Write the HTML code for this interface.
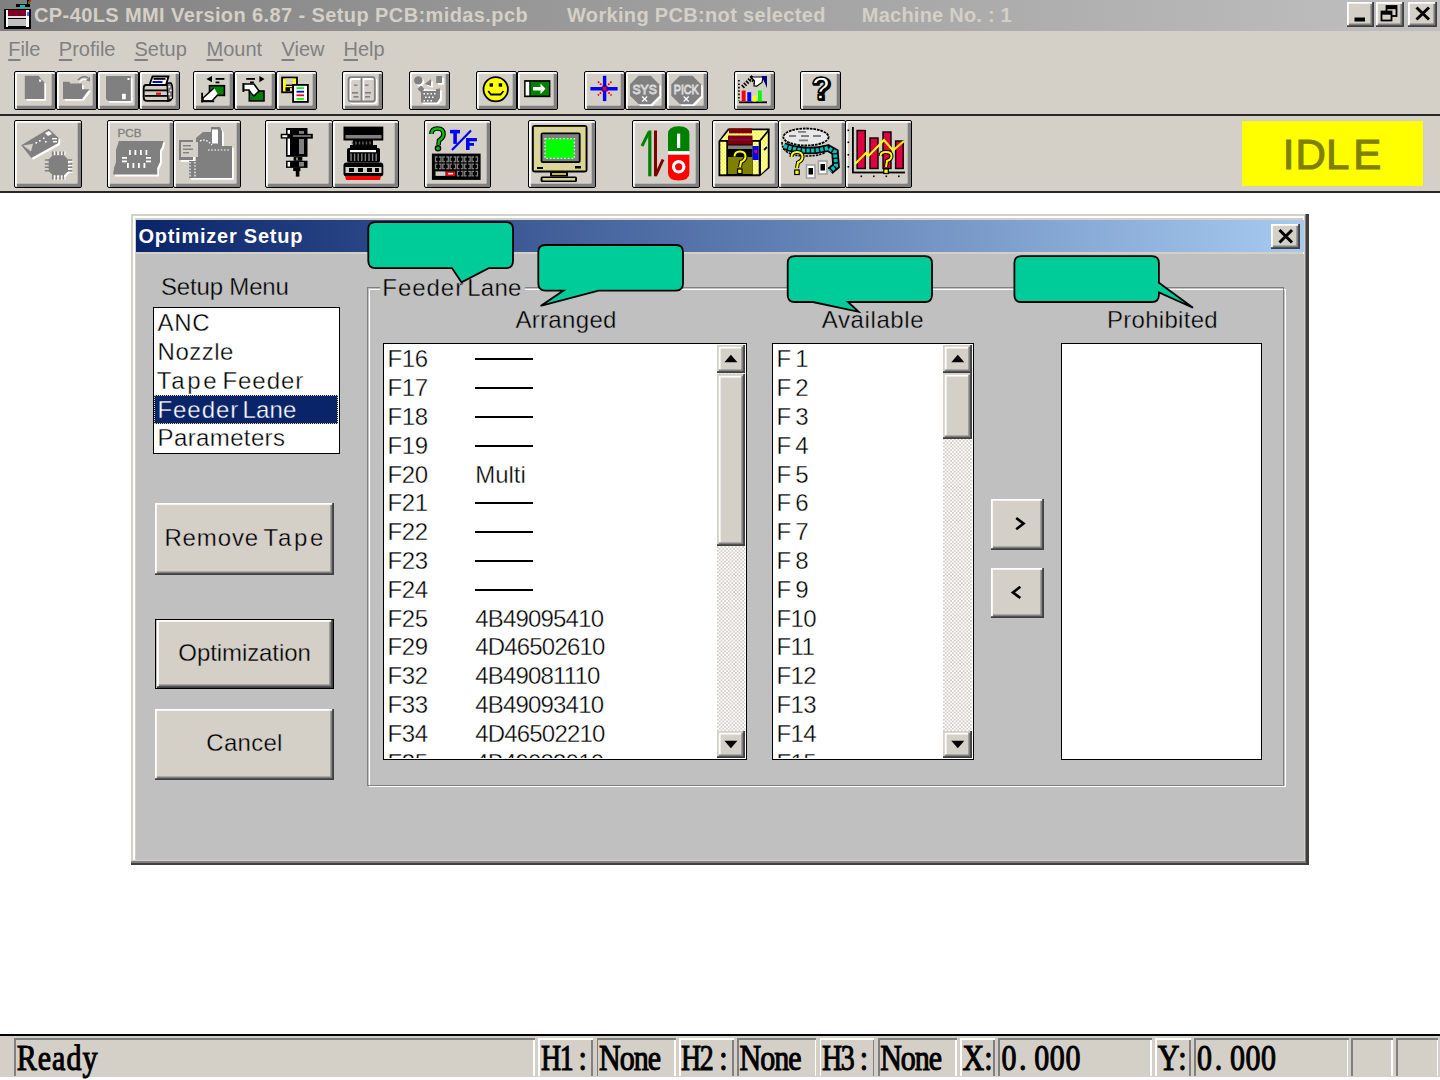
<!DOCTYPE html><html><head><meta charset="utf-8"><style>
html,body{margin:0;padding:0;}
body{width:1440px;height:1080px;overflow:hidden;position:relative;background:#fff;font-family:"Liberation Sans",sans-serif;}
.a{position:absolute;box-sizing:border-box;}
.t{position:absolute;white-space:pre;}
.tb{position:absolute;box-sizing:border-box;background:#d4d0c8;border:1.8px solid #000;border-radius:2px;box-shadow:inset 1.8px 1.8px #fff, inset -3.3px -3.3px #808080;}
.sbtn{position:absolute;box-sizing:border-box;background:#d4d0c8;box-shadow:inset -1.8px -1.8px #404040, inset 1.8px 1.8px #d4d0c8, inset -3.6px -3.6px #808080, inset 3.6px 3.6px #fff;}
.btn{position:absolute;box-sizing:border-box;background:#d4d0c8;box-shadow:inset -1.8px -1.8px #404040, inset 1.8px 1.8px #fff, inset -3.6px -3.6px #808080, inset 3.6px 3.6px #d4d0c8;}
svg{position:absolute;left:0;top:0;overflow:visible;}
</style></head><body>

<div class="a" style="left:0.0px;top:0.0px;width:1440.0px;height:193.1px;background:#d4d0c8"></div>
<div class="a" style="left:0.0px;top:0.0px;width:1440.0px;height:30.5px;background:linear-gradient(to right,#808080,#c0c0c0)"></div>
<svg width="40" height="32" style="left:0;top:0">
<rect x="4" y="9" width="27" height="20" fill="#000"/>
<rect x="7" y="10" width="20" height="6" fill="#800020"/>
<rect x="8" y="16" width="18" height="2" fill="#e0e0e0"/>
<rect x="8" y="19" width="18" height="7" fill="#c0c0c0"/>
<rect x="6" y="10" width="2" height="17" fill="#fff"/>
<rect x="26" y="10" width="3" height="17" fill="#fff"/>
<rect x="27" y="12" width="2" height="4" fill="#6060ff"/>
<rect x="16" y="4" width="12" height="3" fill="#000"/>
<rect x="20" y="5" width="5" height="3" fill="#00c0c0"/>
<rect x="27" y="0" width="3" height="7" fill="#000"/>
<rect x="28" y="1" width="2" height="3" fill="#00a000"/>
<rect x="29" y="0" width="2" height="2" fill="#ff0000"/>
</svg>
<div class="t" style="left:34.0px;top:4.8px;font-size:20px;line-height:20px;color:#d4d0c8;font-weight:bold;font-family:'Liberation Sans',sans-serif;letter-spacing:0.4px">CP-40LS MMI Version 6.87 - Setup PCB:midas.pcb</div>
<div class="t" style="left:567.0px;top:4.8px;font-size:20px;line-height:20px;color:#d4d0c8;font-weight:bold;font-family:'Liberation Sans',sans-serif;letter-spacing:0.33px">Working PCB:not selected</div>
<div class="t" style="left:861.8px;top:4.8px;font-size:20px;line-height:20px;color:#d4d0c8;font-weight:bold;font-family:'Liberation Sans',sans-serif;letter-spacing:0.23px">Machine No. : 1</div>
<div class="btn" style="left:1346.8px;top:2px;width:27.2px;height:25px"></div>
<div class="btn" style="left:1375.8px;top:2px;width:28.0px;height:25px"></div>
<div class="btn" style="left:1407.5px;top:2px;width:29.5px;height:25px"></div>
<svg width="1440" height="30">
<rect x="1354.5" y="17.5" width="10.5" height="4" fill="#000"/>
<rect x="1386.5" y="6" width="10" height="10" fill="none" stroke="#000" stroke-width="1.8"/>
<rect x="1386.5" y="6" width="10" height="3.2" fill="#000"/>
<rect x="1381.5" y="11.5" width="10" height="9" fill="#d4d0c8" stroke="#000" stroke-width="1.8"/>
<rect x="1381.5" y="11.5" width="10" height="3.2" fill="#000"/>
<path d="M1416.5 7.5 L1429 19.5 M1429 7.5 L1416.5 19.5" stroke="#000" stroke-width="3"/>
</svg>
<div class="t" style="left:8.2px;top:38.7px;font-size:20px;line-height:20px;color:#808080;font-weight:normal;font-family:'Liberation Sans',sans-serif;"><u style="text-decoration-thickness:1.5px;text-underline-offset:3px">F</u>ile</div>
<div class="t" style="left:58.8px;top:38.7px;font-size:20px;line-height:20px;color:#808080;font-weight:normal;font-family:'Liberation Sans',sans-serif;"><u style="text-decoration-thickness:1.5px;text-underline-offset:3px">P</u>rofile</div>
<div class="t" style="left:134.5px;top:38.7px;font-size:20px;line-height:20px;color:#808080;font-weight:normal;font-family:'Liberation Sans',sans-serif;"><u style="text-decoration-thickness:1.5px;text-underline-offset:3px">S</u>etup</div>
<div class="t" style="left:206.5px;top:38.7px;font-size:20px;line-height:20px;color:#808080;font-weight:normal;font-family:'Liberation Sans',sans-serif;"><u style="text-decoration-thickness:1.5px;text-underline-offset:3px">M</u>ount</div>
<div class="t" style="left:281.5px;top:38.7px;font-size:20px;line-height:20px;color:#808080;font-weight:normal;font-family:'Liberation Sans',sans-serif;"><u style="text-decoration-thickness:1.5px;text-underline-offset:3px">V</u>iew</div>
<div class="t" style="left:343.5px;top:38.7px;font-size:20px;line-height:20px;color:#808080;font-weight:normal;font-family:'Liberation Sans',sans-serif;"><u style="text-decoration-thickness:1.5px;text-underline-offset:3px">H</u>elp</div>
<div class="tb" style="left:14.4px;top:71.2px;width:41.4px;height:38.8px"></div>
<div class="tb" style="left:55.8px;top:71.2px;width:41.4px;height:38.8px"></div>
<div class="tb" style="left:97.2px;top:71.2px;width:41.4px;height:38.8px"></div>
<div class="tb" style="left:138.6px;top:71.2px;width:41.4px;height:38.8px"></div>
<div class="tb" style="left:193px;top:71.2px;width:41.4px;height:38.8px"></div>
<div class="tb" style="left:234.4px;top:71.2px;width:41.4px;height:38.8px"></div>
<div class="tb" style="left:275.8px;top:71.2px;width:41.4px;height:38.8px"></div>
<div class="tb" style="left:342px;top:71.2px;width:41.4px;height:38.8px"></div>
<div class="tb" style="left:409px;top:71.2px;width:41.4px;height:38.8px"></div>
<div class="tb" style="left:475.6px;top:71.2px;width:41.4px;height:38.8px"></div>
<div class="tb" style="left:517px;top:71.2px;width:41.4px;height:38.8px"></div>
<div class="tb" style="left:583.5px;top:71.2px;width:41.4px;height:38.8px"></div>
<div class="tb" style="left:624.9px;top:71.2px;width:41.4px;height:38.8px"></div>
<div class="tb" style="left:666.3px;top:71.2px;width:41.4px;height:38.8px"></div>
<div class="tb" style="left:733.5px;top:71.2px;width:41.4px;height:38.8px"></div>
<div class="tb" style="left:800px;top:71.2px;width:41.4px;height:38.8px"></div>
<div class="a" style="left:0.0px;top:113.5px;width:1440.0px;height:2.3px;background:#282828"></div>
<div class="tb" style="left:14.4px;top:119.9px;width:67.6px;height:67.7px"></div>
<div class="tb" style="left:106.7px;top:119.9px;width:67.6px;height:67.7px"></div>
<div class="tb" style="left:173.3px;top:119.9px;width:67.6px;height:67.7px"></div>
<div class="tb" style="left:265px;top:119.9px;width:67.6px;height:67.7px"></div>
<div class="tb" style="left:331.6px;top:119.9px;width:67.6px;height:67.7px"></div>
<div class="tb" style="left:423.5px;top:119.9px;width:67.6px;height:67.7px"></div>
<div class="tb" style="left:528px;top:119.9px;width:67.6px;height:67.7px"></div>
<div class="tb" style="left:632.4px;top:119.9px;width:67.6px;height:67.7px"></div>
<div class="tb" style="left:711.5px;top:119.9px;width:67.6px;height:67.7px"></div>
<div class="tb" style="left:778.1px;top:119.9px;width:67.6px;height:67.7px"></div>
<div class="tb" style="left:844.7px;top:119.9px;width:67.6px;height:67.7px"></div>
<div class="a" style="left:0.0px;top:190.9px;width:1440.0px;height:2.2px;background:#282828"></div>
<div class="a" style="left:1242.1px;top:120.8px;width:180.5px;height:65.3px;background:#ffff00"></div>
<div class="t" style="left:1282.8px;top:134px;font-size:42px;line-height:42px;color:#808000;-webkit-text-stroke:1.1px #808000">I</div>
<div class="t" style="left:1295.4px;top:134px;font-size:42px;line-height:42px;color:#808000;-webkit-text-stroke:1.1px #808000">D</div>
<div class="t" style="left:1326.0px;top:134px;font-size:42px;line-height:42px;color:#808000;-webkit-text-stroke:1.1px #808000">L</div>
<div class="t" style="left:1353.2px;top:134px;font-size:42px;line-height:42px;color:#808000;-webkit-text-stroke:1.1px #808000">E</div>
<svg width="1440" height="200" style="left:0;top:0"><defs><pattern id="yck" width="3.6" height="3.6" patternUnits="userSpaceOnUse"><rect width="3.6" height="3.6" fill="#fff"/><rect width="1.8" height="1.8" fill="#ff0"/><rect x="1.8" y="1.8" width="1.8" height="1.8" fill="#ff0"/></pattern><pattern id="mck" width="3.6" height="3.6" patternUnits="userSpaceOnUse"><rect width="3.6" height="3.6" fill="#c00080"/><rect width="1.8" height="1.8" fill="#ff0000"/><rect x="1.8" y="1.8" width="1.8" height="1.8" fill="#ff0000"/></pattern><pattern id="ygk" width="3.6" height="3.6" patternUnits="userSpaceOnUse"><rect width="3.6" height="3.6" fill="#d4d0c8"/><rect width="1.8" height="1.8" fill="#f0e800"/></pattern></defs><g transform="translate(1.8,1.8)" fill="#ffffff"><path d="M24.8 75.8 L38.5 75.8 L44.3 82.3 L44.3 98.9 L24.8 98.9 Z"/></g><g fill="#808080"><path d="M24.8 75.8 L38.5 75.8 L44.3 82.3 L44.3 98.9 L24.8 98.9 Z"/></g>
<rect x="39" y="79.5" width="2.2" height="2.2" fill="#fff"/>
<g transform="translate(1.8,1.8)" fill="#ffffff"><path d="M63 81.7 L69.4 81.7 L70.5 83.4 L82 83.4 L82 89.3 L89.3 89.3 L82 98.9 L63 98.9 Z"/></g><g fill="#808080"><path d="M63 81.7 L69.4 81.7 L70.5 83.4 L82 83.4 L82 89.3 L89.3 89.3 L82 98.9 L63 98.9 Z"/></g>
<path d="M78 80 Q83 74.5 88 78" fill="none" stroke="#808080" stroke-width="1.8"/><path d="M86 80.5 L90 76.5 L90 81.5 Z" fill="#808080"/>
<path d="M79.5 82 Q83 78 86.5 80" fill="none" stroke="#fff" stroke-width="1.2"/>
<g transform="translate(1.8,1.8)" fill="#ffffff"><path d="M106 76.1 L130.8 76.1 L130.8 100.9 L108 100.9 L106 98.9 Z"/></g><g fill="#808080"><path d="M106 76.1 L130.8 76.1 L130.8 100.9 L108 100.9 L106 98.9 Z"/></g>
<rect x="127.5" y="78" width="2" height="2" fill="#fff"/><rect x="122" y="93.8" width="3.8" height="5.5" fill="#fff"/>
<path d="M152.5 76.5 L168.5 76.5 L166 85 L149.5 85 Z" fill="#fff" stroke="#000" stroke-width="1.8"/>
<rect x="153.5" y="78" width="12" height="1.8" fill="#000"/>
<rect x="152.5" y="81" width="10" height="2" fill="#0000ff"/>
<path d="M146 85 L168 85 Q171.5 85 171.5 88.5 L171.5 97.5 Q171.5 100.9 168 100.9 L147 100.9 Q143.7 100.9 143.7 97.5 L143.7 88.5 Q143.7 85 146 85 Z" fill="#d4d0c8" stroke="#000" stroke-width="1.8"/>
<rect x="144.5" y="89.5" width="23" height="1.8" fill="#000"/>
<rect x="144.5" y="95" width="23" height="1.8" fill="#000"/>
<rect x="156" y="92.6" width="5" height="2.2" fill="#ff0000"/>
<path d="M167 83 L171 83 Q173 86 172.5 92 L172.5 98 L168 100.9 Z" fill="#808080" stroke="#000" stroke-width="1.4"/>
<rect x="168.5" y="86" width="1.6" height="1.6" fill="#fff"/><rect x="170" y="89.6" width="1.6" height="1.6" fill="#fff"/><rect x="168.5" y="93.2" width="1.6" height="1.6" fill="#fff"/><rect x="170" y="96.8" width="1.6" height="1.6" fill="#fff"/>
<path d="M206.4 79.1 L212 76 L212 82.2 Z" fill="#000"/>
<rect x="215.6" y="78" width="8.8" height="1.8" fill="#000"/><rect x="215.6" y="81.5" width="3.8" height="1.8" fill="#000"/>
<rect x="209.5" y="85.7" width="14.9" height="9.7" fill="#008000" stroke="#000" stroke-width="1.6"/>
<path d="M214 88 L203 98 L203 101 L212 101 L218 94.5" fill="#fff" stroke="#000" stroke-width="1.6"/>
<rect x="201.2" y="92.7" width="1.8" height="9.7" fill="#000"/>
<rect x="201.2" y="100.4" width="13" height="1.8" fill="#000"/>
<rect x="246.2" y="78" width="8.8" height="1.8" fill="#000"/><rect x="250" y="81.5" width="3.8" height="1.8" fill="#000"/>
<path d="M259.4 76 L264.5 79.1 L259.4 82.2 Z" fill="#000"/>
<rect x="249.3" y="91" width="14.7" height="9.9" fill="#008000" stroke="#000" stroke-width="1.6"/>
<path d="M243.5 84 L254 84 L259 91 L254 96 Q250 92 249 90 L243.5 90 Z" fill="#fff" stroke="#000" stroke-width="1.6"/>
<rect x="242.5" y="83" width="1.8" height="9" fill="#000"/>
<rect x="281.2" y="76.6" width="16.7" height="16.6" fill="#000"/>
<rect x="283" y="78.4" width="13.1" height="13" fill="#ffff00"/>
<rect x="285.8" y="78.4" width="7.5" height="6.2" fill="#d4d0c8"/>
<rect x="285.8" y="84.6" width="7.5" height="1.4" fill="#000"/>
<rect x="285.5" y="87.2" width="8" height="4.2" fill="#000"/>
<rect x="290" y="88" width="2" height="3" fill="#d4d0c8"/>
<rect x="292.2" y="84" width="16.6" height="18.8" fill="#000"/>
<rect x="294" y="85.8" width="13" height="15.2" fill="#fff"/>
<rect x="296.5" y="87.2" width="7.5" height="1.8" fill="#00ff00"/>
<rect x="296.5" y="90.8" width="7.5" height="1.8" fill="#0000ff"/>
<rect x="296.5" y="94.4" width="7.5" height="1.8" fill="#ff0000"/>
<rect x="296.5" y="98" width="7.5" height="1.8" fill="#00ff00"/>
<g transform="translate(1.8,1.8)" fill="none" stroke="#fff" stroke-width="1.8"><rect x="348.5" y="77.2" width="26.3" height="24.3" rx="2.5"/><path d="M361.5 77.2 V101.5"/></g>
<g fill="none" stroke="#808080" stroke-width="1.8"><rect x="348.5" y="77.2" width="26.3" height="24.3" rx="2.5"/><path d="M361.5 77.2 V101.5"/></g>
<g fill="#808080"><rect x="354" y="84.5" width="3.5" height="1.4"/><rect x="352" y="92" width="6" height="1.6"/><rect x="353.5" y="96" width="5" height="1.6"/>
<rect x="365" y="84.5" width="3.5" height="1.4"/><rect x="365" y="92" width="6" height="1.6"/><rect x="365" y="96" width="5" height="1.6"/></g>
<g transform="translate(1.8,1.8)" fill="#ffffff"><circle cx="418.3" cy="80.4" r="4.2"/><rect x="436.25" y="76" width="5.8" height="7"/><path d="M425 84 L431 79 L431 86 Z"/><path d="M421 91 L440 88.5 L440 98 L437 102.5 L421 102.5 Z"/><path d="M417.5 89 L421 85.5 L424.5 89 L421 92.5 Z"/></g><g fill="#808080"><circle cx="418.3" cy="80.4" r="4.2"/><rect x="436.25" y="76" width="5.8" height="7"/><path d="M425 84 L431 79 L431 86 Z"/><path d="M421 91 L440 88.5 L440 98 L437 102.5 L421 102.5 Z"/><path d="M417.5 89 L421 85.5 L424.5 89 L421 92.5 Z"/></g>
<g fill="#fff"><rect x="423.5" y="93" width="1.5" height="1.5"/><rect x="427" y="93" width="1.5" height="1.5"/><rect x="430.5" y="93" width="1.5" height="1.5"/><rect x="434" y="93" width="1.5" height="1.5"/><rect x="425" y="96.5" width="1.5" height="1.5"/><rect x="428.5" y="96.5" width="1.5" height="1.5"/><rect x="432" y="96.5" width="1.5" height="1.5"/><rect x="423.5" y="100" width="1.5" height="1.5"/><rect x="427" y="100" width="1.5" height="1.5"/><rect x="430.5" y="100" width="1.5" height="1.5"/><rect x="424" y="89.5" width="12" height="1.4"/></g>
<circle cx="495.7" cy="89.25" r="12.2" fill="#ffff00" stroke="#000" stroke-width="1.8"/>
<rect x="489.6" y="83.3" width="3.4" height="3.4" fill="#000"/><rect x="498.7" y="83.3" width="3.4" height="3.4" fill="#000"/>
<path d="M488.2 91 L491 94.5 L500.5 94.5 L503.5 91" fill="none" stroke="#000" stroke-width="1.8"/>
<rect x="524.1" y="80.1" width="26.3" height="17.1" fill="#000"/>
<rect x="525.6" y="81.8" width="3.7" height="13.7" fill="#fff"/>
<rect x="530.5" y="81.8" width="18.5" height="13.7" fill="#008000"/>
<path d="M533 87 L540.5 87 L540.5 83.5 L545.5 88.8 L540.5 94 L540.5 90.6 L533 90.6 Z" fill="#fff"/>
<path d="M598 81.5 L611.5 95.5 M611.5 81.5 L598 95.5" stroke="#ff0000" stroke-width="1.8" stroke-dasharray="1.8 1.2"/>
<rect x="602.9" y="75.8" width="3.4" height="25.3" fill="#0000ff"/>
<rect x="590.4" y="87" width="27.2" height="3.5" fill="#0000ff"/>
<rect x="602.9" y="87" width="3.4" height="3.5" fill="#ff0000"/>
<path d="M638.5 75.8 L650.8 75.8 L659.3 84.3 L659.3 95.7 L650.8 104.2 L638.5 104.2 L630 95.7 L630 84.3 Z" transform="translate(1.8,1.8)" fill="#fff"/><path d="M638.5 75.8 L650.8 75.8 L659.3 84.3 L659.3 95.7 L650.8 104.2 L638.5 104.2 L630 95.7 L630 84.3 Z" fill="#808080"/>
<text x="644.65" y="93.5" text-anchor="middle" font-family="Liberation Sans" font-size="13" fill="#808080" stroke="#e0e0e0" stroke-width="0.9" textLength="24.299999999999955" lengthAdjust="spacingAndGlyphs">SYS</text>
<path d="M642.15 96.5 L647.15 101.5 M647.15 96.5 L642.15 101.5" stroke="#fff" stroke-width="1.2"/>
<path d="M679.8 75.8 L692.6 75.8 L701.1 84.3 L701.1 95.7 L692.6 104.2 L679.8 104.2 L671.3 95.7 L671.3 84.3 Z" transform="translate(1.8,1.8)" fill="#fff"/><path d="M679.8 75.8 L692.6 75.8 L701.1 84.3 L701.1 95.7 L692.6 104.2 L679.8 104.2 L671.3 95.7 L671.3 84.3 Z" fill="#808080"/>
<text x="686.2" y="93.5" text-anchor="middle" font-family="Liberation Sans" font-size="12" fill="#808080" stroke="#e0e0e0" stroke-width="0.9" textLength="24.800000000000068" lengthAdjust="spacingAndGlyphs">PICK</text>
<path d="M683.7 96.5 L688.7 101.5 M688.7 96.5 L683.7 101.5" stroke="#fff" stroke-width="1.2"/>
<path d="M738.9 80 V101" stroke="#000" stroke-width="1.6" stroke-dasharray="1.6 1.8"/>
<rect x="738.9" y="101.4" width="28.1" height="1.8" fill="#000"/>
<rect x="741.7" y="90.5" width="3.9" height="11" fill="#ff0000"/>
<rect x="747.3" y="92.2" width="3.9" height="9.3" fill="#0000ff"/>
<rect x="752.5" y="95.6" width="4" height="5.9" fill="#ffff00"/>
<rect x="758" y="90.5" width="3.8" height="11" fill="#00ff00"/>
<path d="M742.5 87 L751.5 78 L758 86" fill="none" stroke="#000" stroke-width="4" stroke-dasharray="1.6 1.4"/>
<path d="M751 77 L763 77 L762 82.5 L757 86 L754 86 L754.5 81 Z" fill="#fff" stroke="#000" stroke-width="1.2"/>
<path d="M761.5 76 L767 76 L767 88 Z" fill="#000080"/>
<text x="821" y="99" text-anchor="middle" font-family="Liberation Sans" font-weight="bold" font-size="31" fill="#000" stroke="#000" stroke-width="2.2" transform="translate(1.2,0.6)">?</text>
<text x="821" y="99" text-anchor="middle" font-family="Liberation Sans" font-weight="bold" font-size="31" fill="#fff" stroke="#000" stroke-width="1.6">?</text>
<g transform="translate(1.8,1.8)" fill="#ffffff"><path d="M21.3 145.3 L48.7 128.7 L58.7 138 L58 143.3 L31.3 158 Z"/><path d="M52.7 155.3 L64 155.3 L68 159.3 L68 171.3 L64 175.3 L52.7 175.3 L48.7 171.3 L48.7 159.3 Z"/></g><g fill="#808080"><path d="M21.3 145.3 L48.7 128.7 L58.7 138 L58 143.3 L31.3 158 Z"/><path d="M52.7 155.3 L64 155.3 L68 159.3 L68 171.3 L64 175.3 L52.7 175.3 L48.7 171.3 L48.7 159.3 Z"/></g>
<path d="M23 145.5 L33 143.8 L31 151.5 Z" fill="#d4d0c8"/><g fill="#fff"><rect x="35.5" y="142" width="1.6" height="1.6"/><rect x="39" y="140" width="1.6" height="1.6"/><rect x="43" y="137.5" width="1.6" height="1.6"/><rect x="45" y="141" width="1.6" height="1.6"/><path d="M45 133 L49 131 L52 134 L48 136 Z"/><rect x="52" y="138" width="5" height="1.4"/><rect x="53" y="141" width="4" height="1.4"/></g>
<g stroke="#808080" stroke-width="1.5"><path d="M52.7 151.5 V155.5 M56.3 151.5 V155.5 M60 151.5 V155.5 M63.3 151.5 V155.5 M52.7 175 V179.5 M56.3 175 V179.5 M60 175 V179.5 M63.3 175 V179.5 M44.8 160 H49 M44.8 164 H49 M44.8 167.3 H49 M44.8 170.7 H49 M68 160 H72.2 M68 164 H72.2 M68 167.3 H72.2 M68 170.7 H72.2"/></g>
<g stroke="#fff" stroke-width="1"><path d="M54.5 151.5 V155 M58 151.5 V155 M61.8 151.5 V155 M65 151.5 V155 M54.5 176 V180 M58 176 V180 M61.8 176 V180 M65 176 V180 M72.5 161.5 H68.5 M72.5 165.5 H68.5 M72.5 169 H68.5 M72.5 172.5 H68.5"/></g>
<text x="117.5" y="136.7" font-family="Liberation Sans" font-size="11.5" fill="#808080" stroke="#808080" stroke-width="0.3" textLength="24" lengthAdjust="spacingAndGlyphs">PCB</text>
<g transform="translate(1.8,1.8)" fill="#ffffff"><path d="M118.9 141 L163.4 141 L162 147 L160 150 L160 162 L157.2 168 L157.2 174.6 L113.1 174.6 L114 168 L116 162 L116 150 Z"/></g><g fill="#808080"><path d="M118.9 141 L163.4 141 L162 147 L160 150 L160 162 L157.2 168 L157.2 174.6 L113.1 174.6 L114 168 L116 162 L116 150 Z"/></g>
<g fill="#fff"><rect x="129" y="150" width="1.8" height="5"/><rect x="134.5" y="150" width="1.8" height="5"/><rect x="140" y="150" width="1.8" height="5"/><rect x="145.5" y="150" width="1.8" height="5"/><rect x="127" y="163" width="1.8" height="5"/><rect x="132.5" y="163" width="1.8" height="5"/><rect x="138" y="163" width="1.8" height="5"/><rect x="143.5" y="163" width="1.8" height="5"/><rect x="122" y="157" width="5" height="1.8"/><rect x="122" y="160.5" width="5" height="1.8"/><rect x="146" y="157" width="5" height="1.8"/><rect x="146" y="160.5" width="5" height="1.8"/></g>
<g transform="translate(1.8,1.8)" fill="#ffffff"><path d="M196 138 L203 132 L211 132 L211 127 L220 127 L222 131 L222 146 L232 146 L232 178 L189 178 L189 161 L196 161 Z"/><path d="M179 140 L193 140 L193 160 L179 160 Z"/></g><g fill="#808080"><path d="M196 138 L203 132 L211 132 L211 127 L220 127 L222 131 L222 146 L232 146 L232 178 L189 178 L189 161 L196 161 Z"/><path d="M179 140 L193 140 L193 160 L179 160 Z"/></g>
<g fill="#fff"><rect x="212" y="129.5" width="6" height="14"/><rect x="181" y="142" width="17" height="15" fill="#d4d0c8"/><rect x="183" y="145" width="8" height="1.4" fill="#808080"/><rect x="183" y="148.5" width="10" height="1.4" fill="#808080"/><rect x="183" y="152" width="6" height="1.4" fill="#808080"/></g>
<g fill="none" stroke="#fff" stroke-width="1.2" stroke-dasharray="1.6 1.6"><path d="M190 162 V178 M195 162 V178"/><path d="M200 141 Q206 138 212 145"/><path d="M208 150 H230"/></g>
<rect x="286" y="128" width="21.5" height="28.8" fill="#000"/>
<rect x="287.6" y="130" width="2.4" height="25" fill="#fff"/>
<rect x="299" y="131" width="5" height="3" fill="#808080"/>
<rect x="299" y="139" width="5" height="15" fill="#808080"/>
<rect x="280.7" y="133.8" width="32.1" height="4.8" fill="#000"/>
<rect x="282.3" y="135.2" width="5" height="2" fill="#fff"/>
<rect x="293" y="135.2" width="18" height="1.6" fill="#808080"/>
<rect x="293.6" y="156.8" width="8.7" height="4" fill="#000"/>
<rect x="296" y="157.5" width="2" height="3" fill="#808080"/>
<rect x="286" y="160.7" width="21.5" height="7.2" fill="#000"/>
<rect x="287.6" y="162" width="2.4" height="4.5" fill="#fff"/>
<rect x="299" y="162" width="5" height="4.5" fill="#808080"/>
<rect x="293.2" y="167.9" width="7.2" height="3.2" fill="#000"/>
<rect x="295.8" y="171" width="3.6" height="5.6" fill="#000"/>
<rect x="343.5" y="126.6" width="39.8" height="13.9" fill="#000"/>
<rect x="345.5" y="135" width="36" height="3.5" fill="#808080"/>
<rect x="353" y="140" width="20" height="6" fill="#000"/>
<rect x="350" y="145" width="27" height="4" fill="#000"/>
<rect x="347" y="148" width="33" height="14.5" rx="2" fill="#000"/>
<rect x="350" y="150" width="26" height="2.2" fill="#fff"/>
<g stroke="#808080" stroke-width="1.4"><path d="M351 153.5 V161 M354.6 153.5 V161 M358.2 153.5 V161 M361.8 153.5 V161 M365.4 153.5 V161 M369 153.5 V161 M372.6 153.5 V161 M376.2 153.5 V161"/><path d="M352.5 141.5 V144.5 M356 141.5 V144.5 M359.5 141.5 V144.5 M363 141.5 V144.5 M366.5 141.5 V144.5 M370 141.5 V144.5" stroke="#606060"/></g>
<rect x="343.5" y="162.5" width="39.8" height="14" rx="3" fill="#000"/>
<rect x="345.5" y="167" width="36" height="6" fill="#d4d0c8"/>
<g fill="#000"><rect x="349" y="168" width="5" height="4"/><rect x="358" y="168" width="5" height="4"/><rect x="367" y="168" width="5" height="4"/><rect x="375" y="168" width="4" height="4"/></g>
<path d="M345 176 L381 176 L380 180 L346 180 Z" fill="#ff0000"/>
<path d="M431.5 134 Q431.5 128.5 437.5 128.5 Q443.5 128.5 443.5 134 Q443.5 138 439 140.5 L438.5 145" fill="none" stroke="#000" stroke-width="4.6"/>
<path d="M431.5 134 Q431.5 128.5 437.5 128.5 Q443.5 128.5 443.5 134 Q443.5 138 439 140.5 L438.5 145" fill="none" stroke="#00c000" stroke-width="2.4"/>
<circle cx="438" cy="148.3" r="2.6" fill="#00c000" stroke="#000" stroke-width="1.4"/>
<rect x="450" y="129.9" width="10" height="3.5" fill="#0000ff"/><rect x="453.3" y="129.9" width="3.6" height="14" fill="#0000ff"/>
<path d="M452 149.9 L471 130.5" stroke="#0000ff" stroke-width="2.2"/>
<rect x="466" y="138" width="3.6" height="12" fill="#0000ff"/><rect x="466" y="138" width="10.9" height="3.3" fill="#0000ff"/><rect x="466" y="143" width="8" height="2.8" fill="#0000ff"/>
<rect x="431.9" y="153.6" width="48.7" height="26.3" fill="#000"/>
<path d="M437.5 157.0 H435.5 V161.5 H437.5 M439.0 157.0 H441.0 V161.5 H439.0" fill="none" stroke="#808080" stroke-width="1.3"/>
<path d="M444.8 157.0 H442.8 V161.5 H444.8 M446.3 157.0 H448.3 V161.5 H446.3" fill="none" stroke="#808080" stroke-width="1.3"/>
<path d="M452.1 157.0 H450.1 V161.5 H452.1 M453.6 157.0 H455.6 V161.5 H453.6" fill="none" stroke="#808080" stroke-width="1.3"/>
<path d="M459.4 157.0 H457.4 V161.5 H459.4 M460.9 157.0 H462.9 V161.5 H460.9" fill="none" stroke="#808080" stroke-width="1.3"/>
<path d="M466.7 157.0 H464.7 V161.5 H466.7 M468.2 157.0 H470.2 V161.5 H468.2" fill="none" stroke="#808080" stroke-width="1.3"/>
<path d="M474.0 157.0 H472.0 V161.5 H474.0 M475.5 157.0 H477.5 V161.5 H475.5" fill="none" stroke="#808080" stroke-width="1.3"/>
<path d="M437.5 164.2 H435.5 V168.7 H437.5 M439.0 164.2 H441.0 V168.7 H439.0" fill="none" stroke="#808080" stroke-width="1.3"/>
<path d="M444.8 164.2 H442.8 V168.7 H444.8 M446.3 164.2 H448.3 V168.7 H446.3" fill="none" stroke="#808080" stroke-width="1.3"/>
<path d="M452.1 164.2 H450.1 V168.7 H452.1 M453.6 164.2 H455.6 V168.7 H453.6" fill="none" stroke="#808080" stroke-width="1.3"/>
<path d="M459.4 164.2 H457.4 V168.7 H459.4 M460.9 164.2 H462.9 V168.7 H460.9" fill="none" stroke="#808080" stroke-width="1.3"/>
<path d="M466.7 164.2 H464.7 V168.7 H466.7 M468.2 164.2 H470.2 V168.7 H468.2" fill="none" stroke="#808080" stroke-width="1.3"/>
<path d="M474.0 164.2 H472.0 V168.7 H474.0 M475.5 164.2 H477.5 V168.7 H475.5" fill="none" stroke="#808080" stroke-width="1.3"/>
<rect x="435.5" y="171.4" width="10" height="4.5" fill="#d4d0c8"/>
<rect x="446.1" y="171.4" width="9" height="4.5" fill="#ff0000"/><rect x="448.1" y="172.9" width="5" height="1.5" fill="#fff"/>
<path d="M459.4 171.4 H457.4 V175.9 H459.4 M460.9 171.4 H462.9 V175.9 H460.9" fill="none" stroke="#808080" stroke-width="1.3"/>
<path d="M466.7 171.4 H464.7 V175.9 H466.7 M468.2 171.4 H470.2 V175.9 H468.2" fill="none" stroke="#808080" stroke-width="1.3"/>
<path d="M474.0 171.4 H472.0 V175.9 H474.0 M475.5 171.4 H477.5 V175.9 H475.5" fill="none" stroke="#808080" stroke-width="1.3"/>
<rect x="531.9" y="124.9" width="55.6" height="47.5" rx="3" fill="#000"/>
<rect x="533.8" y="126.8" width="51.8" height="43.7" fill="url(#ygk)"/>
<rect x="540.6" y="132.4" width="40" height="30.6" rx="2" fill="#000"/>
<rect x="542.4" y="134.2" width="36.4" height="27" fill="#808080"/>
<rect x="545" y="138.6" width="29.4" height="19.8" fill="#00ff00"/><rect x="545" y="138.6" width="29.4" height="19.8" fill="none" stroke="#e0e0e0" stroke-width="1.4" stroke-dasharray="1.8 1.8"/>
<rect x="537" y="167" width="6" height="2" fill="#000"/><rect x="575" y="166" width="6" height="2.5" fill="#000"/>
<rect x="550" y="172" width="18" height="4.5" fill="#000"/><rect x="552" y="173" width="14" height="2" fill="#c8c000"/>
<rect x="540.6" y="176.5" width="36.4" height="5.5" rx="1.5" fill="#000"/><rect x="542.5" y="178" width="32.6" height="2.5" fill="#d4d0a0"/>
<rect x="648.2" y="130.5" width="3.2" height="45.8" fill="#008000"/>
<path d="M642 146 L649 132" stroke="#008000" stroke-width="3"/>
<rect x="654" y="130.5" width="3" height="45.8" fill="#800000"/>
<path d="M656 175 L663 159.5" stroke="#800000" stroke-width="3"/>
<path d="M668 151.3 L668 134 Q668 126.3 678.7 126.3 Q689.4 126.3 689.4 134 L689.4 151.3 Z" fill="#008000"/>
<rect x="677" y="133.6" width="3.2" height="14.4" fill="#fff"/>
<path d="M668 154.5 L689.4 154.5 L689.4 173 Q689.4 180.5 678.7 180.5 Q668 180.5 668 173 Z" fill="#ff0000"/>
<circle cx="678.7" cy="166.8" r="5.2" fill="none" stroke="#fff" stroke-width="3.2"/><rect x="668" y="151.3" width="21.4" height="3.2" fill="#fff"/>
<path d="M718.5 141 L728 128.4 L769.6 128.4 L769.6 168 L760 176.3 L718.5 176.3 Z" fill="#000"/>
<path d="M721 140 L729 130.2 L767.5 130.2 L759.5 140 Z" fill="url(#yck)"/>
<rect x="729" y="128.4" width="23" height="5" fill="#800000"/>
<rect x="720.3" y="141.8" width="6" height="32.5" fill="url(#yck)"/>
<rect x="752.7" y="141.8" width="6" height="32.5" fill="url(#yck)"/>
<path d="M761 141 L767.8 132.5 L767.8 167.5 L761 174 Z" fill="url(#yck)"/>
<rect x="728" y="135.5" width="24.5" height="9" fill="#800000"/>
<rect x="729" y="139" width="22" height="1.4" fill="#800080"/>
<rect x="728" y="145.5" width="24.5" height="3.5" fill="#808080"/>
<rect x="728" y="157" width="24.5" height="17" fill="#808000"/>
<rect x="752.7" y="146" width="6" height="14" fill="#0000ff"/><rect x="754.5" y="150" width="2.5" height="3" fill="#ff0000"/>
<path d="M734.5 156.5 Q734.5 151.5 740 151.5 Q745.5 151.5 745.5 156.5 Q745.5 160 741 162 L740 167" fill="none" stroke="#000" stroke-width="4"/>
<path d="M734.5 156.5 Q734.5 151.5 740 151.5 Q745.5 151.5 745.5 156.5 Q745.5 160 741 162 L740 167" fill="none" stroke="#ffff00" stroke-width="2"/>
<rect x="737.5" y="169" width="4.5" height="4.5" fill="#ffff00" stroke="#000" stroke-width="1.2"/>
<path d="M764 150 L767 147" stroke="#000080" stroke-width="1.8"/>
<ellipse cx="806" cy="137" rx="22.6" ry="8.5" fill="#e8e8e8" stroke="#000" stroke-width="1.8" stroke-dasharray="2.6 0.9"/>
<g fill="#808080"><rect x="789" y="135" width="7" height="2"/><rect x="801" y="135" width="8" height="2"/><rect x="813" y="135" width="8" height="2"/><rect x="798" y="131" width="8" height="1.8"/><rect x="799" y="139.5" width="9" height="1.8"/></g>
<path d="M782 142 Q782 156 806 156 Q826 156 828 148" fill="none" stroke="#000" stroke-width="1.6" stroke-dasharray="2.4 1"/>
<path d="M784 146 Q806 154 828 148 L835 152 L836 166 L830 171" fill="none" stroke="#000" stroke-width="7.5"/>
<path d="M784 146 Q806 154 828 148 L835 152 L836 166 L830 171" fill="none" stroke="#00c0c0" stroke-width="4" stroke-dasharray="3.2 1.4"/>
<path d="M791.5 157 Q791.5 152 797 152 Q802.5 152 802.5 157 Q802.5 160.5 798 162.5 L797 168" fill="none" stroke="#000" stroke-width="4"/>
<path d="M791.5 157 Q791.5 152 797 152 Q802.5 152 802.5 157 Q802.5 160.5 798 162.5 L797 168" fill="none" stroke="#ffff00" stroke-width="2"/>
<rect x="794.7" y="170" width="4.5" height="4.5" fill="#ffff00" stroke="#000" stroke-width="1.2"/>
<rect x="806.5" y="165" width="8.5" height="13" fill="#fff" stroke="#a0a0a0" stroke-width="1.6"/><rect x="808.5" y="168" width="4.5" height="6.5" fill="#000"/>
<rect x="818.5" y="161" width="8.5" height="13" fill="#fff" stroke="#a0a0a0" stroke-width="1.6"/><rect x="820.5" y="164" width="4.5" height="6.5" fill="#000"/>
<rect x="852" y="127" width="1.8" height="46" fill="#000"/>
<rect x="852" y="171.6" width="53" height="1.8" fill="#000"/>
<g fill="#000"><rect x="847.5" y="129.5" width="1.6" height="1.6"/><rect x="847.5" y="141.5" width="1.6" height="1.6"/><rect x="847.5" y="154" width="1.6" height="1.6"/><rect x="847.5" y="166" width="1.6" height="1.6"/>
<rect x="860.5" y="175.5" width="1.6" height="1.6"/><rect x="873" y="175.5" width="1.6" height="1.6"/><rect x="885.5" y="175.5" width="1.6" height="1.6"/><rect x="898" y="175.5" width="1.6" height="1.6"/></g>
<g fill="url(#mck)" stroke="#000" stroke-width="1.4"><rect x="857.1" y="130.5" width="8.2" height="38"/><rect x="870" y="138" width="8" height="30.5"/><rect x="883" y="132" width="8" height="36.5"/><rect x="895.6" y="141" width="7.6" height="27.5"/></g>
<path d="M855 164 L866 153 L868.5 156 L884 140 L893 150.5 L904 141" fill="none" stroke="#ffff00" stroke-width="2"/>
<path d="M880.5 156 Q880.5 152 886 152 Q891.5 152 891.5 156 Q891.5 159.5 887 161 L886 167" fill="none" stroke="#000" stroke-width="4"/>
<path d="M880.5 156 Q880.5 152 886 152 Q891.5 152 891.5 156 Q891.5 159.5 887 161 L886 167" fill="none" stroke="#ffff00" stroke-width="2"/>
<rect x="883.8" y="169" width="4.5" height="4.5" fill="#ffff00" stroke="#000" stroke-width="1.2"/></svg>
<div class="a" style="left:131.1px;top:214.4px;width:1178.2px;height:650.6px;background:#404040"></div>
<div class="a" style="left:131.1px;top:214.4px;width:1175.4px;height:648.2px;background:#808080"></div>
<div class="a" style="left:131.1px;top:214.4px;width:1175.4px;height:648.2px;background:#808080"></div>
<div class="a" style="left:131.1px;top:214.4px;width:1174.1px;height:647.1px;background:#d4d0c8"></div>
<div class="a" style="left:133.0px;top:216.2px;width:1172.2px;height:645.3px;background:#d4d0c8"></div>
<div class="a" style="left:133.0px;top:216.2px;width:1170.5px;height:643.6px;background:#fff"></div>
<div class="a" style="left:134.9px;top:218.1px;width:1168.6px;height:641.7px;background:#d4d0c8"></div>
<div class="a" style="left:136.0px;top:254.0px;width:1167.5px;height:605.8px;background:#c0c0c0"></div>
<div class="a" style="left:136.0px;top:220.0px;width:1167.9px;height:32.4px;background:linear-gradient(to right,#0a246a,#a6caf0)"></div>
<div class="t" style="left:138.4px;top:225.9px;font-size:20px;line-height:20px;color:#fff;font-weight:bold;font-family:'Liberation Sans',sans-serif;letter-spacing:0.76px">Optimizer Setup</div>
<div class="btn" style="left:1271px;top:223.7px;width:29px;height:25.2px"></div>
<svg width="1440" height="1080"><path d="M1279.5 230 L1292 242.5 M1292 230 L1279.5 242.5" stroke="#000" stroke-width="3"/></svg>
<div class="t" style="left:161.0px;top:275.3px;font-size:24px;line-height:24px;color:#000;font-weight:normal;font-family:'Liberation Sans',sans-serif;letter-spacing:-0.17px;-webkit-text-stroke:0.35px #c0c0c0">Setup Menu</div>
<div class="a" style="left:152.9px;top:306.6px;width:187.3px;height:147.3px;background:#fff;border:1.8px solid #000"></div>
<div class="a" style="left:154.4px;top:394.9px;width:184.0px;height:29.0px;background:#0a246a;outline:1.8px dotted #e8d080;outline-offset:-1.8px"></div>
<div class="t" style="left:157.6px;top:311.2px;font-size:24px;line-height:24px;color:#000;font-weight:normal;font-family:'Liberation Sans',sans-serif;letter-spacing:0.65px;-webkit-text-stroke:0.35px #fff">ANC</div>
<div class="t" style="left:157.6px;top:340.0px;font-size:24px;line-height:24px;color:#000;font-weight:normal;font-family:'Liberation Sans',sans-serif;letter-spacing:0.48px;-webkit-text-stroke:0.35px #fff">Nozzle</div>
<div class="t" style="left:156.8px;top:368.8px;font-size:24px;line-height:24px;color:#000;font-weight:normal;font-family:'Liberation Sans',sans-serif;letter-spacing:2.57px;-webkit-text-stroke:0.35px #fff">Tape</div>
<div class="t" style="left:222.4px;top:368.8px;font-size:24px;line-height:24px;color:#000;font-weight:normal;font-family:'Liberation Sans',sans-serif;letter-spacing:0.96px;-webkit-text-stroke:0.35px #fff">Feeder</div>
<div class="t" style="left:157.4px;top:397.6px;font-size:24px;line-height:24px;color:#fff;font-weight:normal;font-family:'Liberation Sans',sans-serif;letter-spacing:0.96px;-webkit-text-stroke:0.35px #0a246a">Feeder</div>
<div class="t" style="left:242.4px;top:397.6px;font-size:24px;line-height:24px;color:#fff;font-weight:normal;font-family:'Liberation Sans',sans-serif;letter-spacing:0.2px;-webkit-text-stroke:0.35px #0a246a">Lane</div>
<div class="t" style="left:157.6px;top:426.4px;font-size:24px;line-height:24px;color:#000;font-weight:normal;font-family:'Liberation Sans',sans-serif;letter-spacing:0.37px;-webkit-text-stroke:0.35px #fff">Parameters</div>
<div class="btn" style="left:154.9px;top:502.9px;width:179.6px;height:71.7px;"></div>
<div class="t" style="left:164.4px;top:525.6px;font-size:24px;line-height:24px;color:#000;font-weight:normal;font-family:'Liberation Sans',sans-serif;letter-spacing:0.88px;-webkit-text-stroke:0.35px #d4d0c8">Remove</div>
<div class="t" style="left:263.5px;top:525.6px;font-size:24px;line-height:24px;color:#000;font-weight:normal;font-family:'Liberation Sans',sans-serif;letter-spacing:2.57px;-webkit-text-stroke:0.35px #d4d0c8">Tape</div>
<div class="a" style="left:154.9px;top:618.5px;width:179.6px;height:70.9px;border:1.8px solid #000"></div>
<div class="btn" style="left:156.7px;top:620.3px;width:176.0px;height:67.3px;"></div>
<div class="t" style="left:94.5px;width:300px;text-align:center;top:641.2px;font-size:24px;line-height:24px;letter-spacing:-0.09px;-webkit-text-stroke:0.35px #d4d0c8">Optimization</div>
<div class="btn" style="left:154.9px;top:708.6px;width:179.6px;height:71.1px;"></div>
<div class="t" style="left:94.5px;width:300px;text-align:center;top:730.7px;font-size:24px;line-height:24px;letter-spacing:0.28px;-webkit-text-stroke:0.35px #d4d0c8">Cancel</div>
<div class="a" style="left:367.2px;top:287.2px;width:916.6px;height:498.4px;border:1.8px solid #808080"></div>
<div class="a" style="left:369.0px;top:289.0px;width:916.6px;height:498.4px;border:1.8px solid #fff;border-right-color:#fff"></div>
<div class="a" style="left:367.2px;top:287.2px;width:914.8px;height:496.6px;border:1.8px solid #808080;border-right:none;border-bottom:none"></div>
<div class="a" style="left:369.0px;top:289.0px;width:914.8px;height:496.6px;border-right:1.8px solid #808080;border-bottom:1.8px solid #808080"></div>
<div class="a" style="left:379.5px;top:276.0px;width:145.7px;height:16.0px;background:#c0c0c0"></div>
<div class="t" style="left:382.3px;top:275.5px;font-size:24px;line-height:24px;color:#000;font-weight:normal;font-family:'Liberation Sans',sans-serif;letter-spacing:0.96px;-webkit-text-stroke:0.35px #c0c0c0">Feeder</div>
<div class="t" style="left:467.3px;top:275.5px;font-size:24px;line-height:24px;color:#000;font-weight:normal;font-family:'Liberation Sans',sans-serif;letter-spacing:0.2px;-webkit-text-stroke:0.35px #c0c0c0">Lane</div>
<div class="t" style="left:515.4px;top:307.8px;font-size:24px;line-height:24px;color:#000;font-weight:normal;font-family:'Liberation Sans',sans-serif;letter-spacing:0.33px;-webkit-text-stroke:0.35px #c0c0c0">Arranged</div>
<div class="t" style="left:821.8px;top:307.8px;font-size:24px;line-height:24px;color:#000;font-weight:normal;font-family:'Liberation Sans',sans-serif;letter-spacing:0.6px;-webkit-text-stroke:0.35px #c0c0c0">Available</div>
<div class="t" style="left:1106.9px;top:307.5px;font-size:24px;line-height:24px;color:#000;font-weight:normal;font-family:'Liberation Sans',sans-serif;letter-spacing:0.3px;-webkit-text-stroke:0.35px #c0c0c0">Prohibited</div>
<div class="a" style="left:383.3px;top:342.8px;width:363.7px;height:417.4px;background:#fff;border:1.8px solid #000;overflow:hidden"></div>
<div class="a" style="left:385.1px;top:344.6px;width:331.4px;height:413.8px;overflow:hidden"><div class="t" style="left:2.5px;top:2.9px;font-size:24px;line-height:24px;letter-spacing:-0.4px;-webkit-text-stroke:0.35px #fff">F16</div><div class="a" style="left:90.3px;top:13.9px;width:57.3px;height:1.8px;background:#000"></div><div class="t" style="left:2.5px;top:31.7px;font-size:24px;line-height:24px;letter-spacing:-0.4px;-webkit-text-stroke:0.35px #fff">F17</div><div class="a" style="left:90.3px;top:42.7px;width:57.3px;height:1.8px;background:#000"></div><div class="t" style="left:2.5px;top:60.5px;font-size:24px;line-height:24px;letter-spacing:-0.4px;-webkit-text-stroke:0.35px #fff">F18</div><div class="a" style="left:90.3px;top:71.5px;width:57.3px;height:1.8px;background:#000"></div><div class="t" style="left:2.5px;top:89.3px;font-size:24px;line-height:24px;letter-spacing:-0.4px;-webkit-text-stroke:0.35px #fff">F19</div><div class="a" style="left:90.3px;top:100.3px;width:57.3px;height:1.8px;background:#000"></div><div class="t" style="left:2.5px;top:118.1px;font-size:24px;line-height:24px;letter-spacing:-0.4px;-webkit-text-stroke:0.35px #fff">F20</div><div class="t" style="left:90.1px;top:118.1px;font-size:24px;line-height:24px;letter-spacing:0px;-webkit-text-stroke:0.35px #fff">Multi</div><div class="t" style="left:2.5px;top:146.9px;font-size:24px;line-height:24px;letter-spacing:-0.4px;-webkit-text-stroke:0.35px #fff">F21</div><div class="a" style="left:90.3px;top:157.9px;width:57.3px;height:1.8px;background:#000"></div><div class="t" style="left:2.5px;top:175.7px;font-size:24px;line-height:24px;letter-spacing:-0.4px;-webkit-text-stroke:0.35px #fff">F22</div><div class="a" style="left:90.3px;top:186.7px;width:57.3px;height:1.8px;background:#000"></div><div class="t" style="left:2.5px;top:204.5px;font-size:24px;line-height:24px;letter-spacing:-0.4px;-webkit-text-stroke:0.35px #fff">F23</div><div class="a" style="left:90.3px;top:215.5px;width:57.3px;height:1.8px;background:#000"></div><div class="t" style="left:2.5px;top:233.3px;font-size:24px;line-height:24px;letter-spacing:-0.4px;-webkit-text-stroke:0.35px #fff">F24</div><div class="a" style="left:90.3px;top:244.3px;width:57.3px;height:1.8px;background:#000"></div><div class="t" style="left:2.5px;top:262.1px;font-size:24px;line-height:24px;letter-spacing:-0.4px;-webkit-text-stroke:0.35px #fff">F25</div><div class="t" style="left:90.1px;top:262.1px;font-size:24px;line-height:24px;letter-spacing:-0.81px;-webkit-text-stroke:0.35px #fff">4B49095410</div><div class="t" style="left:2.5px;top:290.9px;font-size:24px;line-height:24px;letter-spacing:-0.4px;-webkit-text-stroke:0.35px #fff">F29</div><div class="t" style="left:90.1px;top:290.9px;font-size:24px;line-height:24px;letter-spacing:-0.81px;-webkit-text-stroke:0.35px #fff">4D46502610</div><div class="t" style="left:2.5px;top:319.7px;font-size:24px;line-height:24px;letter-spacing:-0.4px;-webkit-text-stroke:0.35px #fff">F32</div><div class="t" style="left:90.1px;top:319.7px;font-size:24px;line-height:24px;letter-spacing:-0.81px;-webkit-text-stroke:0.35px #fff">4B49081110</div><div class="t" style="left:2.5px;top:348.5px;font-size:24px;line-height:24px;letter-spacing:-0.4px;-webkit-text-stroke:0.35px #fff">F33</div><div class="t" style="left:90.1px;top:348.5px;font-size:24px;line-height:24px;letter-spacing:-0.81px;-webkit-text-stroke:0.35px #fff">4B49093410</div><div class="t" style="left:2.5px;top:377.3px;font-size:24px;line-height:24px;letter-spacing:-0.4px;-webkit-text-stroke:0.35px #fff">F34</div><div class="t" style="left:90.1px;top:377.3px;font-size:24px;line-height:24px;letter-spacing:-0.81px;-webkit-text-stroke:0.35px #fff">4D46502210</div><div class="t" style="left:2.5px;top:406.1px;font-size:24px;line-height:24px;letter-spacing:-0.4px;-webkit-text-stroke:0.35px #fff">F35</div><div class="t" style="left:90.1px;top:406.1px;font-size:24px;line-height:24px;letter-spacing:-0.81px;-webkit-text-stroke:0.35px #fff">4B49083010</div></div>
<div class="a" style="left:716.5px;top:344.6px;width:28.7px;height:413.8px;background:repeating-conic-gradient(#fff 0 25%, #d4d0c8 0 50%) 0 0/3.6px 3.6px"></div>
<div class="sbtn" style="left:716.5px;top:344.6px;width:28.7px;height:28.8px;"></div>
<div class="sbtn" style="left:716.5px;top:373.8px;width:28.7px;height:171.8px;"></div>
<div class="sbtn" style="left:716.5px;top:731.1px;width:28.7px;height:27.3px;"></div>
<svg width="1440" height="1080"><path d="M724.4 362.2 L730.9 354.8 L737.4 362.2 Z" fill="#000"/><path d="M724.4 740.8 L730.9 748.2 L737.4 740.8 Z" fill="#000"/></svg>
<div class="a" style="left:772.4px;top:342.8px;width:201.7px;height:417.4px;background:#fff;border:1.8px solid #000"></div>
<div class="a" style="left:774.2px;top:344.6px;width:169px;height:413.8px;overflow:hidden"><div class="t" style="left:2.3px;top:2.9px;font-size:24px;line-height:24px;letter-spacing:-1.25px;-webkit-text-stroke:0.35px #fff">F 1</div><div class="t" style="left:2.3px;top:31.7px;font-size:24px;line-height:24px;letter-spacing:-1.25px;-webkit-text-stroke:0.35px #fff">F 2</div><div class="t" style="left:2.3px;top:60.5px;font-size:24px;line-height:24px;letter-spacing:-1.25px;-webkit-text-stroke:0.35px #fff">F 3</div><div class="t" style="left:2.3px;top:89.3px;font-size:24px;line-height:24px;letter-spacing:-1.25px;-webkit-text-stroke:0.35px #fff">F 4</div><div class="t" style="left:2.3px;top:118.1px;font-size:24px;line-height:24px;letter-spacing:-1.25px;-webkit-text-stroke:0.35px #fff">F 5</div><div class="t" style="left:2.3px;top:146.9px;font-size:24px;line-height:24px;letter-spacing:-1.25px;-webkit-text-stroke:0.35px #fff">F 6</div><div class="t" style="left:2.3px;top:175.7px;font-size:24px;line-height:24px;letter-spacing:-1.25px;-webkit-text-stroke:0.35px #fff">F 7</div><div class="t" style="left:2.3px;top:204.5px;font-size:24px;line-height:24px;letter-spacing:-1.25px;-webkit-text-stroke:0.35px #fff">F 8</div><div class="t" style="left:2.3px;top:233.3px;font-size:24px;line-height:24px;letter-spacing:-1.25px;-webkit-text-stroke:0.35px #fff">F 9</div><div class="t" style="left:2.3px;top:262.1px;font-size:24px;line-height:24px;letter-spacing:-0.65px;-webkit-text-stroke:0.35px #fff">F10</div><div class="t" style="left:2.3px;top:290.9px;font-size:24px;line-height:24px;letter-spacing:-0.65px;-webkit-text-stroke:0.35px #fff">F11</div><div class="t" style="left:2.3px;top:319.7px;font-size:24px;line-height:24px;letter-spacing:-0.65px;-webkit-text-stroke:0.35px #fff">F12</div><div class="t" style="left:2.3px;top:348.5px;font-size:24px;line-height:24px;letter-spacing:-0.65px;-webkit-text-stroke:0.35px #fff">F13</div><div class="t" style="left:2.3px;top:377.3px;font-size:24px;line-height:24px;letter-spacing:-0.65px;-webkit-text-stroke:0.35px #fff">F14</div><div class="t" style="left:2.3px;top:406.1px;font-size:24px;line-height:24px;letter-spacing:-0.65px;-webkit-text-stroke:0.35px #fff">F15</div></div>
<div class="a" style="left:943.3px;top:344.6px;width:29.0px;height:413.8px;background:repeating-conic-gradient(#fff 0 25%, #d4d0c8 0 50%) 0 0/3.6px 3.6px"></div>
<div class="sbtn" style="left:943.3px;top:344.6px;width:29.0px;height:28.8px;"></div>
<div class="sbtn" style="left:943.3px;top:373.3px;width:29.0px;height:66.1px;"></div>
<div class="sbtn" style="left:943.3px;top:731.1px;width:29.0px;height:27.3px;"></div>
<svg width="1440" height="1080"><path d="M951.3 362.2 L957.8 354.8 L964.3 362.2 Z" fill="#000"/><path d="M951.3 740.8 L957.8 748.2 L964.3 740.8 Z" fill="#000"/></svg>
<div class="btn" style="left:990.6px;top:499.3px;width:53.4px;height:50.6px;"></div>
<div class="btn" style="left:990.6px;top:568.2px;width:53.4px;height:49.9px;"></div>
<svg width="1440" height="1080"><path d="M1016.2 518 L1023.6 523.6 L1016.2 529.2" fill="none" stroke="#000" stroke-width="2.6"/><path d="M1020.3 586.8 L1012.9 592.4 L1020.3 598" fill="none" stroke="#000" stroke-width="2.6"/></svg>
<div class="a" style="left:1060.6px;top:342.8px;width:201.4px;height:417.4px;background:#fff;border:1.8px solid #000"></div>
<svg width="1440" height="1080"><path d="M375.3 222.1 L506.0 222.1 Q513.0 222.1 513.0 229.1 L513.0 261.1 Q513.0 268.1 506.0 268.1 L488.7 268.1 L461.5 282.3 L452.0 268.1 L375.3 268.1 Q368.3 268.1 368.3 261.1 L368.3 229.1 Q368.3 222.1 375.3 222.1 Z" fill="#00cc99" stroke="#000" stroke-width="1.8" stroke-linejoin="miter"/></svg>
<svg width="1440" height="1080"><path d="M545.3 245.0 L676.0 245.0 Q683.0 245.0 683.0 252.0 L683.0 283.6 Q683.0 290.6 676.0 290.6 L598.5 290.6 L540.6 305.9 L563.5 290.6 L545.3 290.6 Q538.3 290.6 538.3 283.6 L538.3 252.0 Q538.3 245.0 545.3 245.0 Z" fill="#00cc99" stroke="#000" stroke-width="1.8" stroke-linejoin="miter"/></svg>
<svg width="1440" height="1080"><path d="M794.7 256.2 L925.0 256.2 Q932.0 256.2 932.0 263.2 L932.0 295.0 Q932.0 302.0 925.0 302.0 L848.0 302.0 L858.6 311.8 L812.8 302.0 L794.7 302.0 Q787.7 302.0 787.7 295.0 L787.7 263.2 Q787.7 256.2 794.7 256.2 Z" fill="#00cc99" stroke="#000" stroke-width="1.8" stroke-linejoin="miter"/></svg>
<svg width="1440" height="1080"><path d="M1021.4 256.2 L1151.9 256.2 Q1158.9 256.2 1158.9 263.2 L1158.9 282.8 L1193.0 307.8 L1158.9 292.5 L1158.9 295.0 Q1158.9 302.0 1151.9 302.0 L1021.4 302.0 Q1014.4 302.0 1014.4 295.0 L1014.4 263.2 Q1014.4 256.2 1021.4 256.2 Z" fill="#00cc99" stroke="#000" stroke-width="1.8" stroke-linejoin="miter"/></svg>
<div class="a" style="left:0.0px;top:1034.2px;width:1440.0px;height:43.2px;background:#d4d0c8"></div>
<div class="a" style="left:0.0px;top:1034.2px;width:1440.0px;height:2.2px;background:#000"></div>
<div class="a" style="left:13.9px;top:1038.2px;width:521.1px;height:1.8px;background:#808080"></div>
<div class="a" style="left:13.9px;top:1038.2px;width:1.8px;height:37.6px;background:#808080"></div>
<div class="a" style="left:533.2px;top:1040.0px;width:1.8px;height:35.8px;background:#fff"></div>
<div class="a" style="left:538.3px;top:1038.2px;width:54.9px;height:1.8px;background:#fff"></div>
<div class="a" style="left:538.3px;top:1038.2px;width:1.8px;height:37.6px;background:#fff"></div>
<div class="a" style="left:591.4px;top:1040.0px;width:1.8px;height:35.8px;background:#808080"></div>
<div class="a" style="left:596.7px;top:1038.2px;width:79.1px;height:1.8px;background:#808080"></div>
<div class="a" style="left:596.7px;top:1038.2px;width:1.8px;height:37.6px;background:#808080"></div>
<div class="a" style="left:674.0px;top:1040.0px;width:1.8px;height:35.8px;background:#fff"></div>
<div class="a" style="left:678.9px;top:1038.2px;width:54.9px;height:1.8px;background:#fff"></div>
<div class="a" style="left:678.9px;top:1038.2px;width:1.8px;height:37.6px;background:#fff"></div>
<div class="a" style="left:732.0px;top:1040.0px;width:1.8px;height:35.8px;background:#808080"></div>
<div class="a" style="left:737.3px;top:1038.2px;width:79.1px;height:1.8px;background:#808080"></div>
<div class="a" style="left:737.3px;top:1038.2px;width:1.8px;height:37.6px;background:#808080"></div>
<div class="a" style="left:814.6px;top:1040.0px;width:1.8px;height:35.8px;background:#fff"></div>
<div class="a" style="left:819.5px;top:1038.2px;width:54.9px;height:1.8px;background:#fff"></div>
<div class="a" style="left:819.5px;top:1038.2px;width:1.8px;height:37.6px;background:#fff"></div>
<div class="a" style="left:872.6px;top:1040.0px;width:1.8px;height:35.8px;background:#808080"></div>
<div class="a" style="left:877.9px;top:1038.2px;width:79.1px;height:1.8px;background:#808080"></div>
<div class="a" style="left:877.9px;top:1038.2px;width:1.8px;height:37.6px;background:#808080"></div>
<div class="a" style="left:955.2px;top:1040.0px;width:1.8px;height:35.8px;background:#fff"></div>
<div class="a" style="left:960.4px;top:1038.2px;width:34.6px;height:1.8px;background:#fff"></div>
<div class="a" style="left:960.4px;top:1038.2px;width:1.8px;height:37.6px;background:#fff"></div>
<div class="a" style="left:993.2px;top:1040.0px;width:1.8px;height:35.8px;background:#808080"></div>
<div class="a" style="left:997.9px;top:1038.2px;width:153.9px;height:1.8px;background:#808080"></div>
<div class="a" style="left:997.9px;top:1038.2px;width:1.8px;height:37.6px;background:#808080"></div>
<div class="a" style="left:1150.0px;top:1040.0px;width:1.8px;height:35.8px;background:#fff"></div>
<div class="a" style="left:1155.0px;top:1038.2px;width:36.0px;height:1.8px;background:#fff"></div>
<div class="a" style="left:1155.0px;top:1038.2px;width:1.8px;height:37.6px;background:#fff"></div>
<div class="a" style="left:1189.2px;top:1040.0px;width:1.8px;height:35.8px;background:#808080"></div>
<div class="a" style="left:1194.0px;top:1038.2px;width:154.5px;height:1.8px;background:#808080"></div>
<div class="a" style="left:1194.0px;top:1038.2px;width:1.8px;height:37.6px;background:#808080"></div>
<div class="a" style="left:1346.7px;top:1040.0px;width:1.8px;height:35.8px;background:#fff"></div>
<div class="a" style="left:1350.8px;top:1038.2px;width:41.8px;height:1.8px;background:#808080"></div>
<div class="a" style="left:1350.8px;top:1038.2px;width:1.8px;height:37.6px;background:#808080"></div>
<div class="a" style="left:1390.8px;top:1040.0px;width:1.8px;height:35.8px;background:#fff"></div>
<div class="a" style="left:1395.8px;top:1038.2px;width:42.7px;height:1.8px;background:#808080"></div>
<div class="a" style="left:1395.8px;top:1038.2px;width:1.8px;height:37.6px;background:#808080"></div>
<div class="a" style="left:1436.7px;top:1040.0px;width:1.8px;height:35.8px;background:#fff"></div>
<div class="t" style="left:16.8px;top:1045.4px;font-size:30px;line-height:30px;font-family:'Liberation Serif',serif;font-weight:normal;-webkit-text-stroke:0.9px #000;transform:scaleY(1.19);transform-origin:0 25.12px;letter-spacing:1px">Ready</div>
<div class="t" style="left:540.7px;top:1045.4px;font-size:30px;line-height:30px;font-family:'Liberation Serif',serif;font-weight:normal;-webkit-text-stroke:0.9px #000;transform:scaleY(1.19);transform-origin:0 25.12px;letter-spacing:-1.5px;transform:scale(0.93,1.19)">H1</div>
<div class="t" style="left:578.6px;top:1045.4px;font-size:30px;line-height:30px;font-family:'Liberation Serif',serif;font-weight:normal;-webkit-text-stroke:0.9px #000;transform:scaleY(1.19);transform-origin:0 25.12px;">:</div>
<div class="t" style="left:599.0px;top:1045.4px;font-size:30px;line-height:30px;font-family:'Liberation Serif',serif;font-weight:normal;-webkit-text-stroke:0.9px #000;transform:scaleY(1.19);transform-origin:0 25.12px;letter-spacing:-1px">None</div>
<div class="t" style="left:681.3px;top:1045.4px;font-size:30px;line-height:30px;font-family:'Liberation Serif',serif;font-weight:normal;-webkit-text-stroke:0.9px #000;transform:scaleY(1.19);transform-origin:0 25.12px;letter-spacing:-1.5px;transform:scale(0.93,1.19)">H2</div>
<div class="t" style="left:719.2px;top:1045.4px;font-size:30px;line-height:30px;font-family:'Liberation Serif',serif;font-weight:normal;-webkit-text-stroke:0.9px #000;transform:scaleY(1.19);transform-origin:0 25.12px;">:</div>
<div class="t" style="left:739.6px;top:1045.4px;font-size:30px;line-height:30px;font-family:'Liberation Serif',serif;font-weight:normal;-webkit-text-stroke:0.9px #000;transform:scaleY(1.19);transform-origin:0 25.12px;letter-spacing:-1px">None</div>
<div class="t" style="left:821.9px;top:1045.4px;font-size:30px;line-height:30px;font-family:'Liberation Serif',serif;font-weight:normal;-webkit-text-stroke:0.9px #000;transform:scaleY(1.19);transform-origin:0 25.12px;letter-spacing:-1.5px;transform:scale(0.93,1.19)">H3</div>
<div class="t" style="left:859.8px;top:1045.4px;font-size:30px;line-height:30px;font-family:'Liberation Serif',serif;font-weight:normal;-webkit-text-stroke:0.9px #000;transform:scaleY(1.19);transform-origin:0 25.12px;">:</div>
<div class="t" style="left:880.2px;top:1045.4px;font-size:30px;line-height:30px;font-family:'Liberation Serif',serif;font-weight:normal;-webkit-text-stroke:0.9px #000;transform:scaleY(1.19);transform-origin:0 25.12px;letter-spacing:-1px">None</div>
<div class="t" style="left:962.5px;top:1045.4px;font-size:30px;line-height:30px;font-family:'Liberation Serif',serif;font-weight:normal;-webkit-text-stroke:0.9px #000;transform:scaleY(1.19);transform-origin:0 25.12px;">X</div>
<div class="t" style="left:984.2px;top:1045.4px;font-size:30px;line-height:30px;font-family:'Liberation Serif',serif;font-weight:normal;-webkit-text-stroke:0.9px #000;transform:scaleY(1.19);transform-origin:0 25.12px;">:</div>
<div class="t" style="left:1157.8px;top:1045.4px;font-size:30px;line-height:30px;font-family:'Liberation Serif',serif;font-weight:normal;-webkit-text-stroke:0.9px #000;transform:scaleY(1.19);transform-origin:0 25.12px;">Y</div>
<div class="t" style="left:1178.3px;top:1045.4px;font-size:30px;line-height:30px;font-family:'Liberation Serif',serif;font-weight:normal;-webkit-text-stroke:0.9px #000;transform:scaleY(1.19);transform-origin:0 25.12px;">:</div>
<div class="t" style="left:1001.4px;top:1045.4px;font-size:30px;line-height:30px;font-family:'Liberation Serif',serif;font-weight:normal;-webkit-text-stroke:0.9px #000;transform:scaleY(1.19);transform-origin:0 25.12px;transform:scale(1.0,1.19)">0</div>
<div class="t" style="left:1019.1px;top:1045.4px;font-size:30px;line-height:30px;font-family:'Liberation Serif',serif;font-weight:normal;-webkit-text-stroke:0.9px #000;transform:scaleY(1.19);transform-origin:0 25.12px;">.</div>
<div class="t" style="left:1034.2px;top:1045.4px;font-size:30px;line-height:30px;font-family:'Liberation Serif',serif;font-weight:normal;-webkit-text-stroke:0.9px #000;transform:scaleY(1.19);transform-origin:0 25.12px;transform:scale(1.0,1.19)">0</div>
<div class="t" style="left:1049.8px;top:1045.4px;font-size:30px;line-height:30px;font-family:'Liberation Serif',serif;font-weight:normal;-webkit-text-stroke:0.9px #000;transform:scaleY(1.19);transform-origin:0 25.12px;transform:scale(1.0,1.19)">0</div>
<div class="t" style="left:1065.4px;top:1045.4px;font-size:30px;line-height:30px;font-family:'Liberation Serif',serif;font-weight:normal;-webkit-text-stroke:0.9px #000;transform:scaleY(1.19);transform-origin:0 25.12px;transform:scale(1.0,1.19)">0</div>
<div class="t" style="left:1197.1px;top:1045.4px;font-size:30px;line-height:30px;font-family:'Liberation Serif',serif;font-weight:normal;-webkit-text-stroke:0.9px #000;transform:scaleY(1.19);transform-origin:0 25.12px;transform:scale(1.0,1.19)">0</div>
<div class="t" style="left:1214.8px;top:1045.4px;font-size:30px;line-height:30px;font-family:'Liberation Serif',serif;font-weight:normal;-webkit-text-stroke:0.9px #000;transform:scaleY(1.19);transform-origin:0 25.12px;">.</div>
<div class="t" style="left:1229.9px;top:1045.4px;font-size:30px;line-height:30px;font-family:'Liberation Serif',serif;font-weight:normal;-webkit-text-stroke:0.9px #000;transform:scaleY(1.19);transform-origin:0 25.12px;transform:scale(1.0,1.19)">0</div>
<div class="t" style="left:1245.5px;top:1045.4px;font-size:30px;line-height:30px;font-family:'Liberation Serif',serif;font-weight:normal;-webkit-text-stroke:0.9px #000;transform:scaleY(1.19);transform-origin:0 25.12px;transform:scale(1.0,1.19)">0</div>
<div class="t" style="left:1261.1px;top:1045.4px;font-size:30px;line-height:30px;font-family:'Liberation Serif',serif;font-weight:normal;-webkit-text-stroke:0.9px #000;transform:scaleY(1.19);transform-origin:0 25.12px;transform:scale(1.0,1.19)">0</div>
</body></html>
